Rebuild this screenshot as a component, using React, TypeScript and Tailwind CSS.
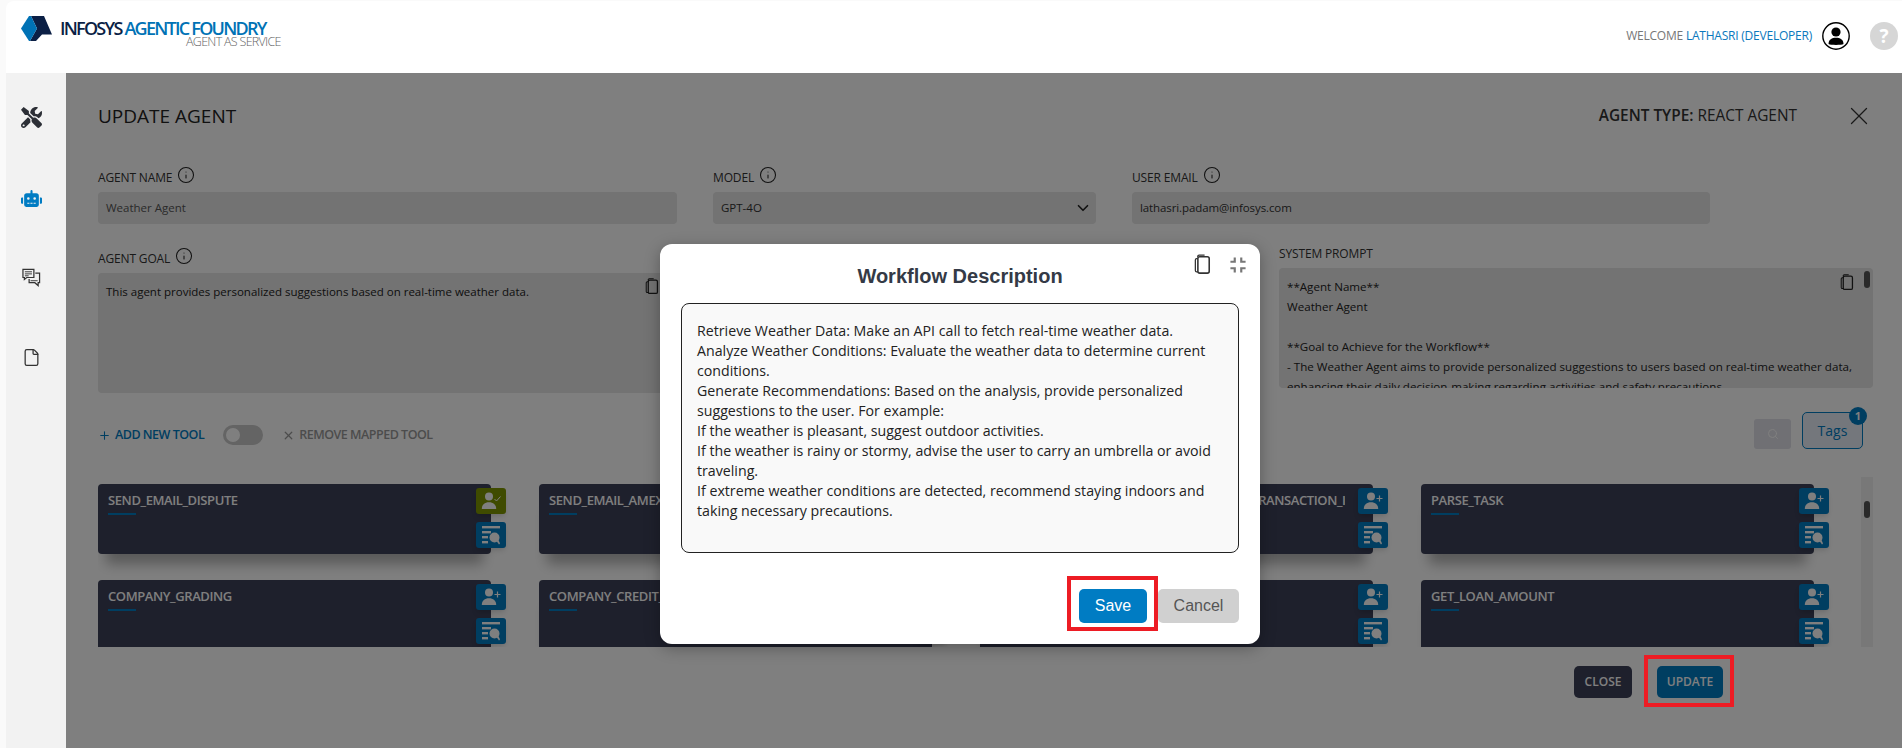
import { FaRobot, FaTools } from "react-icons/fa"
import { MdFullscreenExit } from "react-icons/md"
import { File, Info, Plus, Search, X, ChevronDown } from "lucide-react"

const sans = "font-['Open_Sans',sans-serif]"

const tools = [
  { name: "SEND_EMAIL_DISPUTE", mapped: true },
  { name: "SEND_EMAIL_AMEX_CARD_HOLDER" },
  { name: "GET_CUSTOMER_CARD_ACCOUNT_DATA_BY_TRANSACTION_ID" },
  { name: "PARSE_TASK" },
  { name: "COMPANY_GRADING" },
  { name: "COMPANY_CREDIT_SCORE" },
  { name: "GET_COMPANY_LOAN" },
  { name: "GET_LOAN_AMOUNT" },
]

const workflow = [
  "Retrieve Weather Data: Make an API call to fetch real-time weather data.",
  "Analyze Weather Conditions: Evaluate the weather data to determine current conditions.",
  "Generate Recommendations: Based on the analysis, provide personalized suggestions to the user. For example:",
  "If the weather is pleasant, suggest outdoor activities.",
  "If the weather is rainy or stormy, advise the user to carry an umbrella or avoid traveling.",
  "If extreme weather conditions are detected, recommend staying indoors and taking necessary precautions.",
]

function Logo() {
  return (
    <svg width="31" height="25" viewBox="0 0 31 25" className="shrink-0">
      <polygon points="10,0 23,0 31,18.5 21,18.5 15,25 9,25 16,12.5" fill="#0b1f45" />
      <polygon points="0,12.5 8,0 10,0 16,12.5 9,25 8,25" fill="#0072b5" />
    </svg>
  )
}

function CopyIcon({ className }: { className?: string }) {
  return (
    <svg viewBox="0 0 16 20" fill="none" stroke="currentColor" className={className}>
      <path d="M3.5 3V2.2C3.5 1.5 4 1 4.7 1H10" strokeWidth="1.2" />
      <rect x="3.6" y="2.6" width="10.8" height="15.6" rx="1.8" strokeWidth="1.5" />
      <path d="M3.6 4.5H2.4C1.7 4.5 1.2 5 1.2 5.7V15.8C1.2 16.5 1.7 17 2.4 17H3.6" strokeWidth="1.2" />
    </svg>
  )
}

function ChatIcon() {
  return (
    <svg width="19" height="19" viewBox="0 0 20 20" fill="none" stroke="#333" strokeWidth="1.3">
      <path d="M1 1.5H12.5V10H5L2.5 12V10H1Z" />
      <path d="M3 4H10.5M3 6.2H10.5M3 8.2H7" strokeWidth="1" />
      <path d="M14 5.5H18.5V15.5H17V18.5L13.5 15.5H7.5V11.5" />
      <path d="M9 13.4H16.5" strokeWidth="1" />
    </svg>
  )
}

function UserCircle() {
  return (
    <svg width="28" height="28" viewBox="0 0 28 28">
      <circle cx="14" cy="14" r="13.2" fill="white" stroke="black" strokeWidth="1.4" />
      <circle cx="14" cy="10" r="4.6" fill="black" />
      <path d="M6.5 22C6.5 17.5 10 15.8 14 15.8C18 15.8 21.5 17.5 21.5 22C19.5 23.2 8.5 23.2 6.5 22Z" fill="black" />
    </svg>
  )
}

function MapIcon({ mapped }: { mapped?: boolean }) {
  return (
    <svg width="20" height="18" viewBox="0 0 20 18" fill="#ffffff">
      <circle cx="8" cy="4.5" r="4" />
      <path d="M0.8 17C0.8 12.5 3.8 10.2 8 10.2C12.2 10.2 15.2 12.5 15.2 17Z" />
      {mapped ? (
        <path d="M13.5 7L15.5 9L19.5 4.5" fill="none" stroke="#ffffff" strokeWidth="1" />
      ) : (
        <path d="M16.5 3.5V9.5M13.5 6.5H19.5" fill="none" stroke="#ffffff" strokeWidth="1.2" />
      )}
    </svg>
  )
}

function DetailIcon() {
  return (
    <svg width="20" height="20" viewBox="0 0 20 20" fill="#ffffff">
      <rect x="1" y="1" width="18" height="2.4" />
      <rect x="1" y="6" width="9" height="2.4" />
      <rect x="1" y="11" width="6" height="2.4" />
      <rect x="1" y="16" width="6" height="2.4" />
      <circle cx="13.5" cy="12.5" r="5" />
      <path d="M15.5 16L18 19.5L19 18.5L17.5 15Z" />
    </svg>
  )
}

function FieldLabel({ text, info }: { text: string; info?: boolean }) {
  return (
    <div className="flex h-[16px] items-end gap-[5px] text-[12px] leading-[16px] tracking-[-0.15px] text-[#333]">
      <span>{text}</span>
      {info && <Info size={18} strokeWidth={1.4} className="mb-[2px] text-[#222]" />}
    </div>
  )
}

function ToolCard({ name, mapped }: { name: string; mapped?: boolean }) {
  return (
    <div className="relative h-[70px] w-[393px] rounded-[4px] bg-[#3c4058] shadow-[0_18px_12px_-8px_rgba(0,0,0,0.3)]">
      <div className="w-[365px] overflow-hidden whitespace-nowrap pl-[10px] pt-[7px] text-[13px] font-semibold leading-[18px] tracking-[-0.4px] text-white">
        {name}
      </div>
      <div className="ml-[10px] mt-[4px] h-[2px] w-[28px] bg-[#007cc3]" />
      <div className="absolute -right-[15px] top-[4px] flex flex-col gap-[8px]">
        <div
          className={
            mapped
              ? "flex h-[26px] w-[30px] items-center justify-center rounded-[3px] bg-[#7f9600] shadow-md"
              : "flex h-[26px] w-[30px] items-center justify-center rounded-[3px] bg-[#007cc3] shadow-md"
          }
        >
          <MapIcon mapped={mapped} />
        </div>
        <div className="flex h-[26px] w-[30px] items-center justify-center rounded-[3px] bg-[#007cc3] shadow-md">
          <DetailIcon />
        </div>
      </div>
    </div>
  )
}

export default function App() {
  return (
    <div className={`${sans} relative flex h-[748px] w-[1902px] flex-col overflow-hidden bg-[#fafafa] pl-[6px] pt-[1px]`}>
      <header className="flex h-[72px] shrink-0 items-start justify-between rounded-tl-[8px] bg-white pl-[15px] pr-[4px] pt-[15px]">
        <div className="flex items-start gap-[8px]">
          <Logo />
          <div className="pt-[2px]">
            <div className="whitespace-nowrap text-[18px] font-semibold leading-[20px] tracking-[-1.75px] text-[#0b1f45]">
              INFOSYS <span className="text-[#0072b5]">AGENTIC FOUNDRY</span>
            </div>
            <div className="-mt-[3px] ml-[126px] whitespace-nowrap text-[12.5px] font-light leading-[14px] tracking-[-0.7px] text-[#666]">
              AGENT AS SERVICE
            </div>
          </div>
        </div>
        <div className="flex items-center pt-[6px]">
          <span className="text-[12px] leading-[28px] tracking-[-0.22px] text-[#777]">
            WELCOME <span className="text-[#0a78bd]">LATHASRI (DEVELOPER)</span>
          </span>
          <div className="ml-[10px]">
            <UserCircle />
          </div>
          <div className="ml-[20px] flex h-[28px] w-[28px] items-center justify-center rounded-full bg-[#d6d6d6] text-[19px] font-bold leading-none text-white">
            ?
          </div>
        </div>
      </header>

      <div className="flex flex-1">
        <aside className="flex w-[60px] shrink-0 flex-col items-center bg-[#f2f2f2] pr-[10px] pt-[33px]">
          <div className="flex h-[22px] items-center">
            <FaTools size={21} className="text-[#2c2f36]" />
          </div>
          <div className="mt-[59px] flex h-[22px] items-center">
            <FaRobot size={21} className="text-[#007cc3]" />
          </div>
          <div className="mt-[57px] flex h-[22px] items-center">
            <ChatIcon />
          </div>
          <div className="mt-[58px] flex h-[22px] items-center">
            <File size={19} strokeWidth={1.6} className="text-[#333]" />
          </div>
        </aside>

        <main className="flex-1 bg-white pl-[32px] pr-[29px] pt-[30px]">
          <div className="flex h-[26px] items-center justify-between">
            <h1 className="text-[19px] font-normal leading-[26px] text-[#222]">UPDATE AGENT</h1>
            <div className="flex items-center">
              <span className="text-[15.4px] leading-[26px] text-[#333]">
                <b className="font-semibold">AGENT TYPE:</b> REACT AGENT
              </span>
              <X size={30} strokeWidth={1} className="-mr-[1px] ml-[47px] text-[#333]" />
            </div>
          </div>

          <div className="mt-[41px] flex gap-[36px]">
            <div className="w-[579px]">
              <FieldLabel text="AGENT NAME" info />
              <div className="mt-[6px] flex h-[32px] items-center rounded-[4px] bg-[#e6e6e6] pl-[8px] text-[11.5px] text-[#555]">
                Weather Agent
              </div>
            </div>
            <div className="w-[383px]">
              <FieldLabel text="MODEL" info />
              <div className="mt-[6px] flex h-[32px] items-center justify-between rounded-[4px] bg-[#e6e6e6] pl-[8px] pr-[4px] text-[11.5px] text-[#333]">
                GPT-4O
                <ChevronDown size={18} strokeWidth={2.2} className="text-[#222]" />
              </div>
            </div>
            <div className="w-[578px]">
              <FieldLabel text="USER EMAIL" info />
              <div className="mt-[6px] flex h-[32px] items-center rounded-[4px] bg-[#e6e6e6] pl-[8px] text-[11.5px] tracking-[-0.1px] text-[#333]">
                lathasri.padam@infosys.com
              </div>
            </div>
          </div>

          <div className="flex justify-between">
            <div className="mt-[27px] w-[590px]">
              <FieldLabel text="AGENT GOAL" info />
              <div className="relative mt-[6px] h-[120px] rounded-[4px] bg-[#e6e6e6] pl-[8px] pt-[9px] text-[11.5px] leading-[20px] text-[#222]">
                This agent provides personalized suggestions based on real-time weather data.
                <CopyIcon className="absolute right-[29px] top-[5px] h-[17px] w-[14px] text-[#222]" />
              </div>
            </div>
            <div className="mt-[22px] w-[594px]">
              <FieldLabel text="SYSTEM PROMPT" />
              <div className="relative mt-[6px] h-[120px] overflow-hidden rounded-[4px] bg-[#e6e6e6] pl-[8px] pt-[9px] text-[11.6px] leading-[20px] text-[#222]">
                <p>**Agent Name**</p>
                <p>Weather Agent</p>
                <p className="mt-[20px]">**Goal to Achieve for the Workflow**</p>
                <p className="whitespace-nowrap">- The Weather Agent aims to provide personalized suggestions to users based on real-time weather data,</p>
                <p className="whitespace-nowrap">enhancing their daily decision-making regarding activities and safety precautions.</p>
                <CopyIcon className="absolute right-[19px] top-[6px] h-[17px] w-[14px] text-[#222]" />
                <div className="absolute right-[3px] top-[3px] h-[17px] w-[6px] rounded-full bg-[#555]" />
              </div>
            </div>
          </div>

          <div className="mt-[19px] flex h-[37px] items-start justify-between pr-[10px]">
            <div className="mt-[13px] flex h-[20px] items-center text-[12.5px] font-semibold tracking-[-0.5px]">
              <span className="flex items-center gap-[4px] text-[#007cc3]">
                <Plus size={13} strokeWidth={2} />
                ADD NEW TOOL
              </span>
              <div className="ml-[19px] flex h-[20px] w-[40px] items-center rounded-full bg-[#c8c8c8] pl-[3px]">
                <div className="h-[14px] w-[14px] rounded-full bg-white" />
              </div>
              <span className="ml-[19px] flex items-center gap-[4px] text-[#999]">
                <X size={13} strokeWidth={2.4} />
                REMOVE MAPPED TOOL
              </span>
            </div>
            <div className="flex items-end gap-[11px]">
              <div className="flex h-[30px] w-[37px] items-center justify-center rounded-[3px] bg-[#e0e0e8]">
                <Search size={12} className="text-white" />
              </div>
              <div className="relative flex h-[37px] w-[61px] items-center justify-center rounded-[5px] border border-[#007cc3] bg-[#e8eef8] text-[14px] text-[#007cc3]">
                Tags
                <span className="absolute -right-[5px] -top-[6px] flex h-[18px] w-[18px] items-center justify-center rounded-full bg-[#007cc3] text-[11px] font-bold text-white">
                  1
                </span>
              </div>
            </div>
          </div>

          <div className="mt-[28px] flex h-[170px] justify-between">
            <div className="h-[170px] flex-1 overflow-hidden pt-[7px]">
              <div className="grid grid-cols-[393px_393px_393px_393px] gap-x-[48px] gap-y-[26px]">
                {tools.map((tool) => (
                  <ToolCard key={tool.name} name={tool.name} mapped={tool.mapped} />
                ))}
              </div>
            </div>
            <div className="h-[170px] w-[12px] bg-[#f0f0f0] pl-[3px] pt-[24px]">
              <div className="h-[17px] w-[6px] rounded-full bg-[#555]" />
            </div>
          </div>

          <div className="mr-[150px] mt-[19px] flex justify-end gap-[25px]">
            <button className="h-[32px] w-[58px] rounded-[5px] bg-[#3c4058] text-[12px] font-semibold text-white">CLOSE</button>
            <div className="relative">
              <button className="h-[32px] w-[66px] rounded-[5px] bg-[#007cc3] text-[12px] font-semibold text-white">UPDATE</button>
              <div className="absolute -bottom-[9px] -left-[13px] -right-[11px] -top-[11px] z-30 border-[4px] border-[#ed1c24]" />
            </div>
          </div>
        </main>
      </div>

      {/* dim layer only covers the content area, header and sidebar stay bright */}
      <div className="absolute bottom-0 left-[66px] right-0 top-[73px] z-10 bg-black/50" />

      <div className="absolute left-[660px] top-[244px] z-20 h-[400px] w-[600px] rounded-[12px] bg-white px-[21px] font-['Liberation_Sans',sans-serif] shadow-[0_4px_16px_rgba(0,0,0,0.3)]">
        <h2 className="pt-[19px] text-center text-[20px] font-bold leading-[26px] text-[#343a46]">Workflow Description</h2>
        <CopyIcon className="absolute right-[49px] top-[10px] h-[21px] w-[17px] text-[#333]" />
        <MdFullscreenExit size={26} className="absolute right-[9px] top-[8px] text-[#777]" />
        <div className={`${sans} mt-[14px] h-[250px] rounded-[8px] border border-[#222] bg-[#f9f9f9] pl-[15px] pr-[18px] pt-[17px] text-[14.2px] leading-[20px] text-[#222]`}>
          {workflow.map((line) => (
            <p key={line}>{line}</p>
          ))}
        </div>
        <div className="mt-[36px] flex justify-end gap-[11px]">
          <div className="relative">
            <button className="h-[34px] w-[68px] rounded-[5px] bg-[#007cc3] text-[16px] text-white">Save</button>
            <div className="absolute -bottom-[8px] -left-[12px] -right-[11px] -top-[13px] border-[4px] border-[#ed1c24]" />
          </div>
          <button className="h-[34px] w-[81px] rounded-[5px] bg-[#d0d0d0] text-[16px] text-[#555]">Cancel</button>
        </div>
      </div>
    </div>
  )
}
